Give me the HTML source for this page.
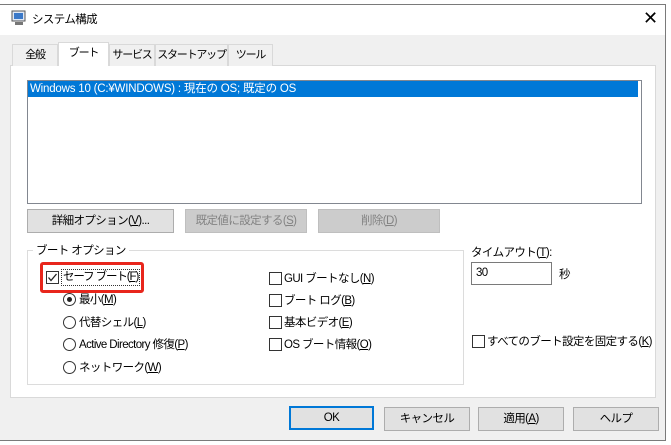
<!DOCTYPE html>
<html><head><meta charset="utf-8"><style>
*{box-sizing:border-box;margin:0;padding:0}
body{width:671px;height:445px;background:#fff;font-family:"Liberation Sans","Noto Sans CJK JP",sans-serif;font-size:11.5px;letter-spacing:-0.6px;color:#000;position:relative;overflow:hidden}
.a{position:absolute;white-space:nowrap}
.win{left:0;top:4px;width:666px;height:437px;border:1px solid #7a7a7a;border-left:none;background:#f0f0f0}
.title{left:0;top:5px;width:665px;height:30px;background:#fff}
.tab{top:44px;height:22px;border:1px solid #d9d9d9;border-bottom:none;background:#f0f0f0;text-align:center;line-height:20px;letter-spacing:-1.2px;font-size:11px}
.panel{left:10px;top:65px;width:646px;height:333px;background:#fff;border:1px solid #d9d9d9}
.btn{height:24px;border:1px solid #adadad;background:#e1e1e1;text-align:center;line-height:22px}
.dis{background:#cccccc;border-color:#bfbfbf;color:#838383}
.cb{width:13px;height:13px;border:1px solid #333;background:#fff}
.rb{width:13px;height:13px;border:1px solid #333;border-radius:50%;background:#fff}
u{text-decoration:underline}
</style></head><body>
<div class="a win"></div>
<div class="a title"></div>
<svg class="a" style="left:11px;top:10px" width="16" height="16"><rect x="1" y="1" width="13" height="10" fill="#dfe8f5" stroke="#555"/><rect x="3" y="3" width="9" height="6" fill="#3a78c8"/><rect x="4" y="12" width="8" height="3" fill="#777"/></svg>
<div class="a" style="left:32px;top:11px">システム構成</div>
<div class="a" style="left:643px;top:8px;font-size:18px;font-weight:300;line-height:20px">✕</div>
<div class="a panel"></div>
<div class="a tab" style="left:12px;width:46px">全般</div>
<div class="a tab" style="left:58px;width:51px;top:42px;height:24px;background:#fff">ブート</div>
<div class="a tab" style="left:109px;width:46px">サービス</div>
<div class="a tab" style="left:155px;width:73px">スタートアップ</div>
<div class="a tab" style="left:228px;width:45px">ツール</div>
<div class="a" style="left:27px;top:80px;width:615px;height:124px;border:1px solid #828790;background:#fff"></div>
<div class="a" style="left:28px;top:81px;width:610px;height:16px;background:#0078d7;color:#fff;padding-left:2px;line-height:16px;letter-spacing:-0.2px">Windows 10 (C:¥WINDOWS) : 現在の OS; 既定の OS</div>
<div class="a btn" style="left:27px;top:209px;width:147px">詳細オプション(<u>V</u>)...</div>
<div class="a btn dis" style="left:185px;top:209px;width:122px">既定値に設定する(<u>S</u>)</div>
<div class="a btn dis" style="left:318px;top:209px;width:122px">削除(<u>D</u>)</div>
<div class="a" style="left:27px;top:250px;width:437px;height:135px;border:1px solid #dcdcdc"></div>
<div class="a" style="left:33px;top:242px;background:#fff;padding:0 3px">ブート オプション</div>
<div class="a" style="left:40px;top:262px;width:104px;height:31px;border:3px solid #e8261c;border-radius:3px"></div>
<div class="a cb" style="left:46px;top:271px"></div>
<svg class="a" style="left:46px;top:271px" width="13" height="13"><path d="M2.5 6.5 L5 9.5 L10.5 3" fill="none" stroke="#222" stroke-width="1.3"/></svg>
<div class="a" style="left:61px;top:269px;border:1px dotted #333;padding:0 1px;line-height:15px;letter-spacing:-1.1px">セーフ ブート(<u>F</u>)</div>
<div class="a rb" style="left:63px;top:293px"></div><div class="a" style="left:67px;top:297px;width:5px;height:5px;border-radius:50%;background:#222"></div>
<div class="a" style="left:79px;top:291px">最小(<u>M</u>)</div>
<div class="a rb" style="left:63px;top:316px"></div><div class="a" style="left:79px;top:314px">代替シェル(<u>L</u>)</div>
<div class="a rb" style="left:63px;top:338px"></div><div class="a" style="left:79px;top:336px">Active Directory 修復(<u>P</u>)</div>
<div class="a rb" style="left:63px;top:361px"></div><div class="a" style="left:79px;top:359px">ネットワーク(<u>W</u>)</div>
<div class="a cb" style="left:269px;top:272px"></div><div class="a" style="left:284px;top:270px">GUI ブートなし(<u>N</u>)</div>
<div class="a cb" style="left:269px;top:294px"></div><div class="a" style="left:284px;top:292px">ブート ログ(<u>B</u>)</div>
<div class="a cb" style="left:269px;top:316px"></div><div class="a" style="left:284px;top:314px">基本ビデオ(<u>E</u>)</div>
<div class="a cb" style="left:269px;top:338px"></div><div class="a" style="left:284px;top:336px">OS ブート情報(<u>O</u>)</div>
<div class="a" style="left:471px;top:244px">タイムアウト(<u>T</u>):</div>
<div class="a" style="left:471px;top:262px;width:81px;height:23px;border:1px solid #7a7a7a;background:#fff;padding-left:4px;line-height:21px">30</div>
<div class="a" style="left:559px;top:266px">秒</div>
<div class="a cb" style="left:472px;top:335px"></div><div class="a" style="left:487px;top:333px">すべてのブート設定を固定する(<u>K</u>)</div>
<div class="a btn" style="left:289px;top:406px;width:85px;border:2px solid #0078d7;line-height:20px">OK</div>
<div class="a btn" style="left:384px;top:407px;width:86px">キャンセル</div>
<div class="a btn" style="left:478px;top:407px;width:86px">適用(<u>A</u>)</div>
<div class="a btn" style="left:573px;top:407px;width:86px">ヘルプ</div>
</body></html>
